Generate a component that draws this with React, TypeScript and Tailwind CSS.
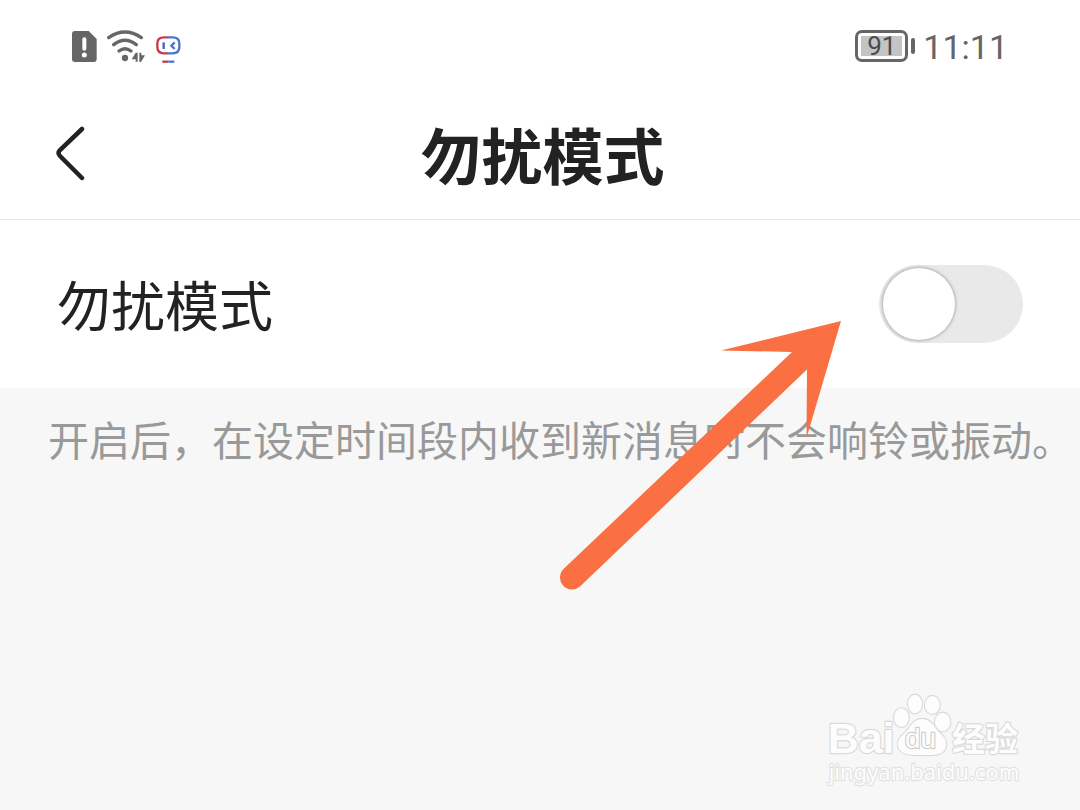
import { useState } from 'react'

const CJK_FONT = "font-['Noto_Sans_CJK_SC',sans-serif]"

function SimAlertIcon() {
  return (
    <svg viewBox="0 0 75 96" className="h-8 w-[25px]" aria-hidden="true">
      <path d="M9 3h41l24 24v60a9 9 0 0 1-9 9H9a9 9 0 0 1-9-9V12a9 9 0 0 1 9-9Z" fill="#666" />
      <path d="M37 28v28" stroke="#fff" strokeWidth="12" strokeLinecap="round" />
      <circle cx="37" cy="75" r="7.5" fill="#fff" />
    </svg>
  )
}

function WifiIcon() {
  return (
    <svg viewBox="168 27 114 96" className="h-8 w-[38px]" aria-hidden="true">
      <g fill="none" stroke="#666" strokeWidth="10" strokeLinecap="round">
        <path d="M173 50Q222 16 271 50" />
        <path d="M188 71Q222 45 256 71" />
        <path d="M204 90Q222 76 240 90" />
      </g>
      <circle cx="222" cy="111" r="9.5" fill="#666" />
      <path d="M260 95v27h-6v-7h-12l12-20Z" fill="#666" />
      <path d="M265 95h6v8h11l-12 20h-5Z" fill="#666" />
    </svg>
  )
}

function BotIcon() {
  return (
    <svg viewBox="312 31 78 102" className="h-[34px] w-[26px]" aria-hidden="true">
      <g fill="none" strokeWidth="7">
        <path d="M351 56h-12q-20 0-20 18v12q0 18 20 18h12" stroke="#c43c4c" />
        <path d="M351 56h14q20 0 20 18v12q0 18-20 18h-14" stroke="#4676d2" />
        <path d="M338 71v20" stroke="#4a61b8" />
        <path d="M371 71l-10 10 10 10" stroke="#4676d2" />
        <path d="M334 129h18" stroke="#c43c4c" />
        <path d="M352 129h18" stroke="#4676d2" />
      </g>
    </svg>
  )
}

function Battery({ level }: { level: number }) {
  return (
    <div className="flex items-center gap-[3px]">
      <div className="flex h-8 w-[53px] rounded-[7px] border-3 border-[#666] p-[3px]">
        <span className="flex flex-1 items-center justify-center bg-[#c4c4c4] text-[26px] leading-none text-[#4c4c4c]">
          {level}
        </span>
      </div>
      <span className="h-4 w-1 rounded-full bg-[#666]" />
    </div>
  )
}

function StatusBar() {
  return (
    <div className="flex h-[92px] items-center justify-between px-[72px] font-[Roboto,sans-serif]">
      <div className="flex items-center gap-[10px]">
        <SimAlertIcon />
        <WifiIcon />
        <BotIcon />
      </div>
      <div className="flex items-center gap-2">
        <Battery level={91} />
        <time className="pt-[2px] text-[34px] leading-none text-[#666]">11:11</time>
      </div>
    </div>
  )
}

function PointerArrow() {
  return (
    <svg
      viewBox="0 0 320 300"
      className="pointer-events-none absolute top-[300px] left-1/2 h-[300px] w-[320px]"
      aria-hidden="true"
    >
      <path
        d="M301 21 181 50.500l71 1.500L24 268.500a12 12 0 0 0 16 18L267 69.500 266.500 138Z"
        fill="#fa7042"
      />
    </svg>
  )
}

function Watermark() {
  return (
    <svg
      viewBox="0 0 600 300"
      className="pointer-events-none absolute right-[54px] bottom-5 h-[100px] w-[200px]"
      aria-hidden="true"
    >
      <g
        fill="#fdfdfd"
        stroke="#dadada"
        strokeWidth="7"
        strokeLinejoin="round"
        paintOrder="stroke"
      >
        <text x="5" y="190" fontSize="129" fontWeight="700" fontFamily="Liberation Sans, sans-serif">
          Bai
        </text>
        <ellipse cx="226" cy="83" rx="22" ry="28" />
        <ellipse cx="267" cy="42" rx="21" ry="28" />
        <ellipse cx="319" cy="45" rx="22" ry="27" />
        <ellipse cx="350" cy="96" rx="23" ry="28" />
        <path d="M288 87c30 0 38 28 54 43 15 14 21 24 18 39-5 26-31 27-72 26-39 1-68-2-72-28-2-16 7-26 20-38 17-15 24-42 52-42Z" />
        <text x="237" y="174" fontSize="84" fontFamily="Liberation Sans, sans-serif" stroke="#cfcfcf">
          du
        </text>
        <text x="378" y="184" fontSize="99" fontWeight="700" fontFamily="Noto Sans CJK SC, sans-serif">
          经验
        </text>
        <text x="8" y="269" fontSize="66" fontFamily="Noto Sans, sans-serif" stroke="#e2e2e2">
          jingyan.baidu.com
        </text>
      </g>
    </svg>
  )
}

export default function App() {
  const [enabled, setEnabled] = useState(false)

  return (
    <div className={`relative min-h-screen overflow-hidden bg-[#f7f7f7] text-[#222] ${CJK_FONT}`}>
      <div className="bg-white">
        <StatusBar />
        <header className="grid h-32 grid-cols-[1fr_auto_1fr] items-center border-b border-[#e6e6e6] pr-[50px] pb-[5px] pl-[55px]">
          <button type="button" aria-label="返回" className="w-8 cursor-pointer">
            <svg viewBox="0 0 32 56" className="h-14 w-8" aria-hidden="true">
              <path
                d="M27 4 5 25q-3 3 0 6l22 22"
                fill="none"
                stroke="#222"
                strokeWidth="4.500"
                strokeLinecap="round"
              />
            </svg>
          </button>
          <h1 className="text-[61px] leading-none font-bold">勿扰模式</h1>
        </header>
        <div className="flex h-[168px] items-center justify-between px-[57px]">
          <label htmlFor="dnd" className="text-[54px] leading-none">
            勿扰模式
          </label>
          <input
            id="dnd"
            type="checkbox"
            role="switch"
            checked={enabled}
            onChange={(e) => setEnabled(e.target.checked)}
            className="h-[78px] w-36 cursor-pointer appearance-none rounded-full bg-[#e9e9e9] px-1 py-[3px] transition-colors before:block before:size-[72px] before:rounded-full before:bg-white before:shadow-[0_0_3px_1px_rgba(0,0,0,0.25)] before:transition-transform checked:bg-[#fa7042] checked:before:translate-x-16"
          />
        </div>
      </div>
      <p className="pt-7 pl-12 text-[41px] leading-[44px] whitespace-nowrap text-[#999]">
        开启后，在设定时间段内收到新消息时不会响铃或振动。
      </p>
      <PointerArrow />
      <Watermark />
    </div>
  )
}
